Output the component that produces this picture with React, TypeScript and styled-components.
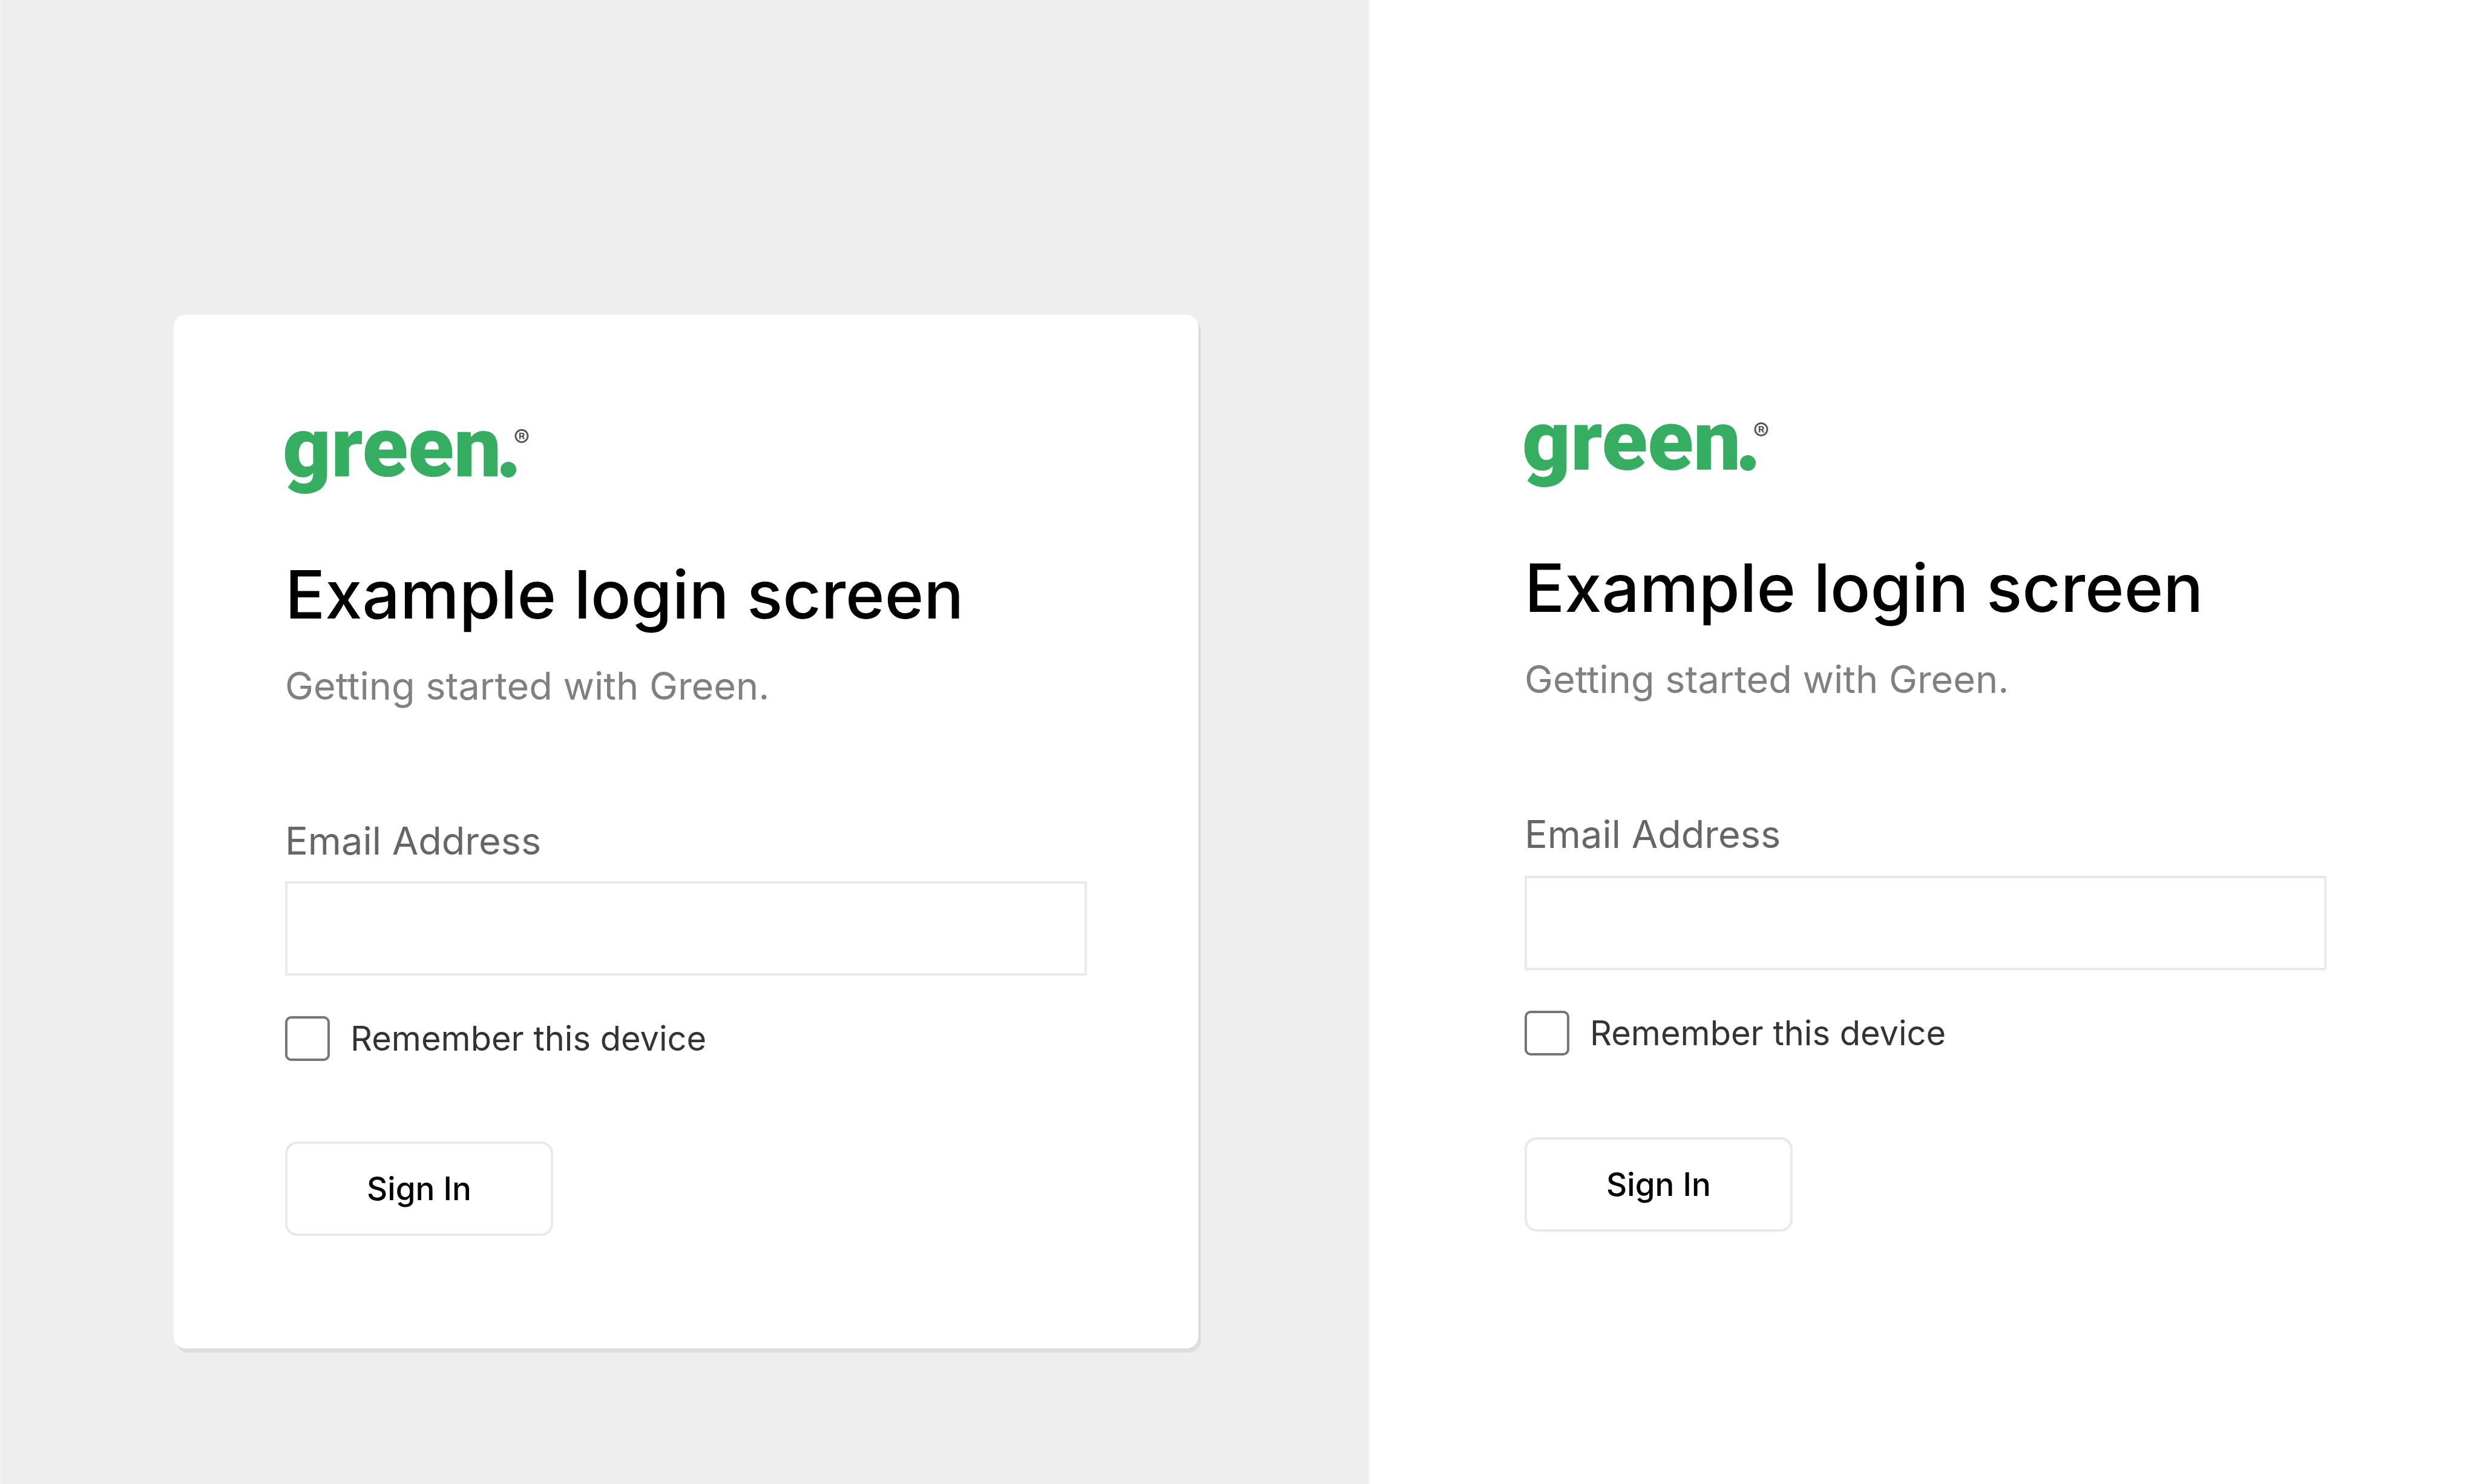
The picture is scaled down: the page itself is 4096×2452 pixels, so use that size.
import React, { useId } from 'react';
import styled, { createGlobalStyle } from 'styled-components';

const GlobalStyle = createGlobalStyle`
  *, *::before, *::after { box-sizing: border-box; }
  body {
    margin: 0;
    background: #fff;
    font-family: Inter, "Open Sans", sans-serif;
  }
`;

const Page = styled.main`
  display: grid;
  grid-template-columns: 2263fr 1833fr;
  min-height: 100vh;
`;

const CardPanel = styled.section`
  padding: 520px 280px 0 284px;
  background: #eee;
  border: solid #f2f2f2;
  border-width: 0 3px;
`;

const PlainPanel = styled.section`
  display: flex;
  justify-content: center;
  padding: 698px 60px 0 64px;
`;

const Card = styled.div`
  padding: 189px 184px 186px;
  background: #fff;
  border-radius: 20px;
  box-shadow: 4px 7px 0 #dedede;
`;

const Form = styled.form`
  display: flex;
  flex-direction: column;
  align-items: flex-start;
  width: 100%;
  max-width: 1325px;
`;

const Logo = styled.svg`
  display: block;
  width: 404px;
  height: 100px;
  overflow: visible;
`;

const LogoWord = styled.text`
  font: 900 139px Roboto, sans-serif;
  fill: #36ae61;
`;

const LogoMark = styled.text`
  font: 400 40px Inter, sans-serif;
  fill: #555055;
  text-anchor: middle;
`;

const Title = styled.h1<{ $roomy: boolean }>`
  margin: ${(p) => (p.$roomy ? 108 : 108)}px 0 0;
  font-size: 110px;
  font-weight: 500;
  line-height: 130px;
  color: #000;
`;

const Subtitle = styled.p`
  margin: 48px 0 0;
  font-size: 63px;
  line-height: 76px;
  color: #808080;
`;

const Field = styled.div<{ $roomy: boolean }>`
  display: flex;
  flex-direction: column;
  gap: ${(p) => (p.$roomy ? 31 : 29)}px;
  width: 100%;
  margin-top: 180px;
`;

const FieldLabel = styled.label`
  font-size: 63px;
  line-height: 76px;
  color: #666;
`;

const TextInput = styled.input`
  width: 100%;
  height: 156px;
  padding: 0 40px;
  font: inherit;
  font-size: 56px;
  background: #fff;
  border: 4px solid #e9e9e9;
  border-radius: 0;
`;

const Remember = styled.label`
  display: flex;
  align-items: center;
  gap: 34px;
  margin-top: 67px;
  font-size: 56px;
  line-height: 74px;
  color: #333;
`;

const Checkbox = styled.input`
  appearance: none;
  width: 74px;
  height: 74px;
  margin: 0;
  background: #fff;
  border: 4px solid #767676;
  border-radius: 10px;

  &:checked { background: #36ae61; }
`;

const SubmitButton = styled.button<{ $roomy: boolean }>`
  width: 443px;
  height: 156px;
  margin-top: ${(p) => (p.$roomy ? 135 : 133)}px;
  padding: 0;
  font: inherit;
  font-size: 53px;
  font-weight: 500;
  color: #000;
  background: #fff;
  border: 4px solid #e9e9e9;
  border-radius: 20px;
`;

function GreenLogo() {
  return (
    <Logo viewBox="0 0 404 100" role="img" aria-label="green.®">
      <LogoWord x="-4" y="78">green</LogoWord>
      <circle cx="369" cy="67" r="13" fill="#36ae61" />
      <LogoMark x="391" y="29">®</LogoMark>
    </Logo>
  );
}

function LoginForm({ roomy = false }: { roomy?: boolean }) {
  const emailId = useId();
  const rememberId = useId();
  return (
    <Form onSubmit={(e) => e.preventDefault()}>
      <GreenLogo />
      <Title $roomy={roomy}>Example login screen</Title>
      <Subtitle>Getting started with Green.</Subtitle>
      <Field $roomy={roomy}>
        <FieldLabel htmlFor={emailId}>Email Address</FieldLabel>
        <TextInput id={emailId} type="email" />
      </Field>
      <Remember htmlFor={rememberId}>
        <Checkbox id={rememberId} type="checkbox" />
        Remember this device
      </Remember>
      <SubmitButton type="submit" $roomy={roomy}>Sign In</SubmitButton>
    </Form>
  );
}

export default function App() {
  return (
    <>
      <GlobalStyle />
      <Page>
        <CardPanel>
          <Card>
            <LoginForm />
          </Card>
        </CardPanel>
        <PlainPanel>
          <LoginForm roomy />
        </PlainPanel>
      </Page>
    </>
  );
}
